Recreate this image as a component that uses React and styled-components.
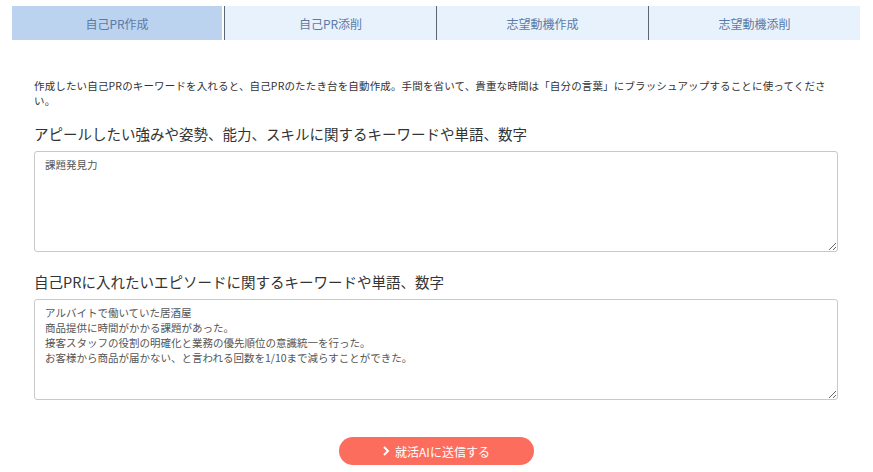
import React from 'react'
import styled, { createGlobalStyle } from 'styled-components'

const text = '#333333'
const tabBg = '#e8f2fd'
const tabActive = '#bcd3ef'
const tabText = '#5b7aa5'
const border = '#c9c9c9'
const accent = '#fd6d5e'

const GlobalStyle = createGlobalStyle`
  body {
    margin: 0;
    background: #ffffff;
    font-family: "Noto Sans CJK JP", "Noto Sans", sans-serif;
    color: ${text};
  }
`

const Page = styled.div`
  padding: 6px 13px 0 12px;
`

const Tabs = styled.nav`
  display: grid;
  grid-template-columns: repeat(4, 1fr);
  height: 34px;
`

const Tab = styled.div`
  display: flex;
  align-items: center;
  justify-content: center;
  font-size: 12px;
  color: ${tabText};
  background: ${(p) => (p.$active ? tabActive : tabBg)};
  border-left: ${(p) => (p.$first ? 'none' : `1px solid #5f6670`)};
  margin-right: ${(p) => (p.$first ? '2px' : '0')};
`

const Body = styled.main`
  padding: 38px 22px 0 22px;
`

const Lead = styled.p`
  margin: 0 0 15px;
  font-size: 10.5px;
  line-height: 15px;
  letter-spacing: 0.15px;
  color: ${text};
`

const Field = styled.div`
  display: flex;
  flex-direction: column;
  gap: 6px;
  margin-bottom: 19px;
`

const Label = styled.label`
  font-size: 14.5px;
  line-height: 22px;
  color: ${text};
`

const TextArea = styled.textarea`
  box-sizing: border-box;
  width: 100%;
  height: 101px;
  padding: 5px 10px;
  border: 1px solid ${border};
  border-radius: 3px;
  font-family: "Noto Sans CJK JP", "Noto Sans", sans-serif;
  font-size: 10.5px;
  line-height: 15px;
  color: #555555;
  resize: vertical;
  outline: none;
`

const Actions = styled.div`
  display: flex;
  justify-content: center;
  padding-top: 18px;
`

const Submit = styled.button`
  display: flex;
  align-items: center;
  justify-content: center;
  gap: 5px;
  width: 195px;
  height: 28px;
  border: none;
  border-radius: 14px;
  background: ${accent};
  color: #ffffff;
  font-family: "Noto Sans CJK JP", "Noto Sans", sans-serif;
  font-size: 12px;
  cursor: pointer;
`

const Chevron = () => (
  <svg width="8" height="10" viewBox="0 0 8 10">
    <path d="M2 1 L6 5 L2 9" fill="none" stroke="#fff" strokeWidth="2" />
  </svg>
)

const tabs = ['自己PR作成', '自己PR添削', '志望動機作成', '志望動機添削']

const episode = `アルバイトで働いていた居酒屋
商品提供に時間がかかる課題があった。
接客スタッフの役割の明確化と業務の優先順位の意識統一を行った。
お客様から商品が届かない、と言われる回数を1/10まで減らすことができた。`

const App = () => (
  <Page>
    <GlobalStyle />
    <Tabs>
      {tabs.map((t, i) => (
        <Tab key={t} $active={i === 0} $first={i === 0}>
          {t}
        </Tab>
      ))}
    </Tabs>
    <Body>
      <Lead>
        作成したい自己PRのキーワードを入れると、自己PRのたたき台を自動作成。手間を省いて、貴重な時間は「自分の言葉」にブラッシュアップすることに使ってください。
      </Lead>
      <Field>
        <Label>アピールしたい強みや姿勢、能力、スキルに関するキーワードや単語、数字</Label>
        <TextArea defaultValue="課題発見力" />
      </Field>
      <Field>
        <Label>自己PRに入れたいエピソードに関するキーワードや単語、数字</Label>
        <TextArea defaultValue={episode} />
      </Field>
      <Actions>
        <Submit>
          <Chevron />
          就活AIに送信する
        </Submit>
      </Actions>
    </Body>
  </Page>
)

export default App
